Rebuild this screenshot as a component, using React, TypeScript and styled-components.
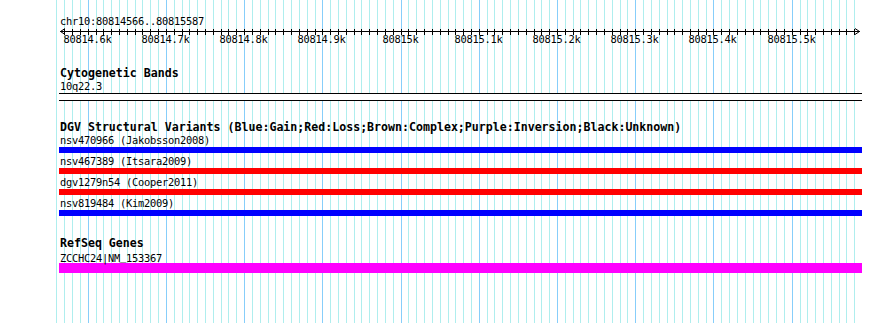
import React from "react";
import styled, { createGlobalStyle } from "styled-components";

const GlobalStyle = createGlobalStyle`
  html, body { margin: 0; padding: 0; background: #ffffff; }
  body { font-family: "DejaVu Sans Mono", "Liberation Mono", monospace; }
`;

const MAJOR0 = 87.7;
const STEP = 7.822;
const ticks = Array.from({ length: 103 }, (_, i) => i - 4);
const px = (k: number) => Math.round(MAJOR0 + k * STEP) + 0.5;

const majors = [
  "80814.6k", "80814.7k", "80814.8k", "80814.9k", "80815k",
  "80815.1k", "80815.2k", "80815.3k", "80815.4k", "80815.5k",
];

const Page = styled.div`
  position: relative;
  width: 890px;
  height: 323px;
  overflow: hidden;
  background: #ffffff;
`;

const GridLayer = styled.svg`
  position: absolute;
  left: 0;
  top: 0;
  z-index: 0;
`;

const Content = styled.div`
  position: relative;
  z-index: 1;
  display: flex;
  flex-direction: column;
  padding-top: 15px;
`;

const SmallText = styled.div`
  position: relative;
  z-index: 2;
  font-family: "DejaVu Sans Mono", "Liberation Mono", monospace;
  font-size: 10.4px;
  letter-spacing: -0.26px;
  line-height: 13px;
  height: 13px;
  color: #000;
  padding-left: 60px;
  white-space: nowrap;
`;

const LowMark = styled.span`
  display: inline-block;
  vertical-align: 2px;
`;

const TrackTitle = styled.div<{ $gap: number }>`
  font-family: "DejaVu Sans Mono", "Liberation Mono", monospace;
  font-weight: bold;
  font-size: 11.6px;
  line-height: 13px;
  height: 13px;
  color: #000;
  padding-left: 60px;
  margin-top: ${(p) => p.$gap}px;
  white-space: nowrap;
`;

const RulerSvg = styled.svg`
  display: block;
  margin-top: -2px;
`;

const BandBox = styled.div`
  margin-left: 59px;
  width: 803px;
  height: 6px;
  background: #ffffff;
  border-top: 1px solid #000;
  border-bottom: 1px solid #000;
`;

const FeatureRow = styled.div`
  display: flex;
  flex-direction: column;
  padding-bottom: 2px;
`;

const Bar = styled.div<{ $color: string; $h: number }>`
  margin-left: 59px;
  width: 803px;
  height: ${(p) => p.$h}px;
  background: ${(p) => p.$color};
`;

const variants = [
  { label: "nsv470966 (Jakobsson2008)", color: "#0000ff" },
  { label: "nsv467389 (Itsara2009)", color: "#ff0000" },
  { label: "dgv1279n54 (Cooper2011)", color: "#ff0000" },
  { label: "nsv819484 (Kim2009)", color: "#0000ff" },
];

export default function App() {
  return (
    <>
      <GlobalStyle />
      <Page>
        <GridLayer width={890} height={323} shapeRendering="crispEdges">
          {ticks.map((k) => (
            <line
              key={k}
              x1={px(k)}
              x2={px(k)}
              y1={0}
              y2={323}
              stroke={k >= 0 && k <= 90 && k % 10 === 0 ? "#87cefa" : "#afeeee"}
              strokeWidth={1}
            />
          ))}
        </GridLayer>
        <Content>
          <SmallText>chr10:80814566..80815587</SmallText>
          <RulerSvg width={890} height={21}>
            <g shapeRendering="crispEdges">
              <line x1={60} x2={860} y1={5.5} y2={5.5} stroke="#000" />
              {ticks
                .filter((k) => k >= -3)
                .map((k) => (
                  <line key={k} x1={px(k)} x2={px(k)} y1={3} y2={9} stroke="#000" />
                ))}
            </g>
            <polyline points="65,2.5 60.5,5.5 65,8.5" fill="none" stroke="#000" />
            <polyline points="855,2.5 859.5,5.5 855,8.5" fill="none" stroke="#000" />
            {majors.map((m, i) => (
              <text
                key={m}
                x={Math.round(MAJOR0 + i * 10 * STEP) - 0.5}
                y={17}
                textAnchor="middle"
                fontFamily="'DejaVu Sans Mono', 'Liberation Mono', monospace"
                fontSize={10.4}
                letterSpacing={-0.26}
                fill="#000"
              >
                {m}
              </text>
            ))}
          </RulerSvg>
          <TrackTitle $gap={20}>Cytogenetic Bands</TrackTitle>
          <SmallText>10q22.3</SmallText>
          <BandBox />
          <TrackTitle $gap={20}>
            DGV Structural Variants (Blue:Gain;Red:Loss;Brown:Complex;Purple:Inversion;Black:Unknown)
          </TrackTitle>
          {variants.map((v) => (
            <FeatureRow key={v.label}>
              <SmallText>{v.label}</SmallText>
              <Bar $color={v.color} $h={6} />
            </FeatureRow>
          ))}
          <TrackTitle $gap={19}>RefSeq Genes</TrackTitle>
          <SmallText>
            ZCCHC24|NM<LowMark>_</LowMark>153367
          </SmallText>
          <Bar $color="#ff00ff" $h={10} />
        </Content>
      </Page>
    </>
  );
}
